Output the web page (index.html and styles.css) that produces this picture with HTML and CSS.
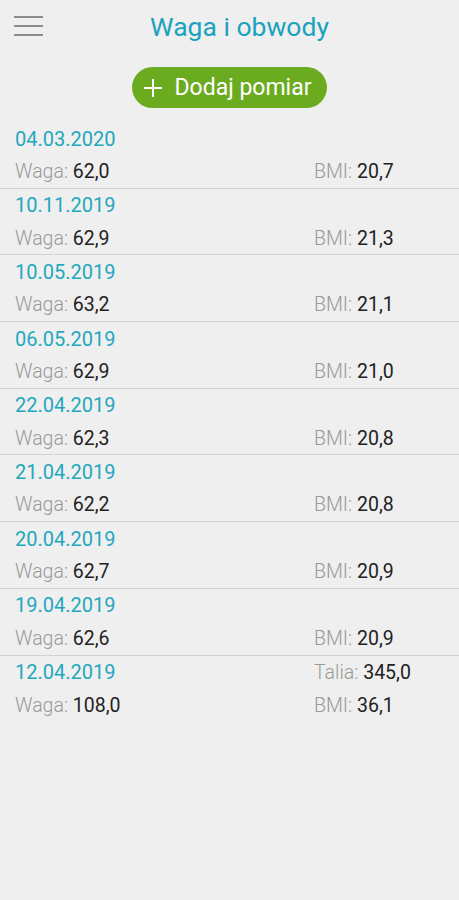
FILE: index.html
```html
<!DOCTYPE html>
<html lang="pl">
<head>
    <meta charset="UTF-8">
    <meta name="viewport" content="width=device-width, initial-scale=1.0">
    <title>Waga i obwody</title>
    <link rel="stylesheet" href="styles.css">
</head>
<body>

<div id="app">
    <div class="topbar">
        <button class="menu-btn" aria-label="Menu">
            <span></span><span></span><span></span>
        </button>
        <h1 class="title">Waga i obwody</h1>
    </div>

    <div class="add-wrap">
        <button class="add-btn">
            <svg width="18" height="18" viewBox="0 0 18 18">
                <path d="M9 0v18M0 9h18" stroke="#fff" stroke-width="2"/>
            </svg>
            Dodaj pomiar
        </button>
    </div>

    <div class="entries">
        <div class="entry">
            <div class="line"><span class="date">04.03.2020</span></div>
            <div class="line">
                <span class="cell"><span class="lbl">Waga:</span> 62,0</span>
                <span class="cell right"><span class="lbl">BMI:</span> 20,7</span>
            </div>
        </div>
        <div class="entry">
            <div class="line"><span class="date">10.11.2019</span></div>
            <div class="line">
                <span class="cell"><span class="lbl">Waga:</span> 62,9</span>
                <span class="cell right"><span class="lbl">BMI:</span> 21,3</span>
            </div>
        </div>
        <div class="entry">
            <div class="line"><span class="date">10.05.2019</span></div>
            <div class="line">
                <span class="cell"><span class="lbl">Waga:</span> 63,2</span>
                <span class="cell right"><span class="lbl">BMI:</span> 21,1</span>
            </div>
        </div>
        <div class="entry">
            <div class="line"><span class="date">06.05.2019</span></div>
            <div class="line">
                <span class="cell"><span class="lbl">Waga:</span> 62,9</span>
                <span class="cell right"><span class="lbl">BMI:</span> 21,0</span>
            </div>
        </div>
        <div class="entry">
            <div class="line"><span class="date">22.04.2019</span></div>
            <div class="line">
                <span class="cell"><span class="lbl">Waga:</span> 62,3</span>
                <span class="cell right"><span class="lbl">BMI:</span> 20,8</span>
            </div>
        </div>
        <div class="entry">
            <div class="line"><span class="date">21.04.2019</span></div>
            <div class="line">
                <span class="cell"><span class="lbl">Waga:</span> 62,2</span>
                <span class="cell right"><span class="lbl">BMI:</span> 20,8</span>
            </div>
        </div>
        <div class="entry">
            <div class="line"><span class="date">20.04.2019</span></div>
            <div class="line">
                <span class="cell"><span class="lbl">Waga:</span> 62,7</span>
                <span class="cell right"><span class="lbl">BMI:</span> 20,9</span>
            </div>
        </div>
        <div class="entry">
            <div class="line"><span class="date">19.04.2019</span></div>
            <div class="line">
                <span class="cell"><span class="lbl">Waga:</span> 62,6</span>
                <span class="cell right"><span class="lbl">BMI:</span> 20,9</span>
            </div>
        </div>
        <div class="entry last">
            <div class="line">
                <span class="date">12.04.2019</span>
                <span class="cell right"><span class="lbl">Talia:</span> 345,0</span>
            </div>
            <div class="line">
                <span class="cell"><span class="lbl">Waga:</span> 108,0</span>
                <span class="cell right"><span class="lbl">BMI:</span> 36,1</span>
            </div>
        </div>
    </div>
</div>

</body>
</html>
```

FILE: styles.css
```css
body {
    margin: 0;
    font-family: Roboto, "Noto Sans", sans-serif;
    background-color: #efefef;
    color: #222;
}

#app {
    width: 459px;
    height: 900px;
}

.topbar {
    position: relative;
    height: 54px;
    display: flex;
    align-items: center;
    justify-content: center;
}

.menu-btn {
    position: absolute;
    left: 14px;
    top: 16px;
    width: 29px;
    height: 20px;
    padding: 0;
    border: none;
    background: none;
    display: flex;
    flex-direction: column;
    justify-content: space-between;
}

.menu-btn span {
    display: block;
    height: 2px;
    background-color: #8c8c8c;
}

.title {
    margin: 0;
    font-size: 26.5px;
    font-weight: normal;
    color: #1ba2bf;
    padding-left: 20px;
    padding-bottom: 1px;
}

.add-wrap {
    display: flex;
    justify-content: center;
    padding-top: 13px;
}

.add-btn {
    display: flex;
    align-items: center;
    gap: 12px;
    height: 41px;
    padding: 0 15px 0 12px;
    border: none;
    border-radius: 21px;
    background-color: #6aab1f;
    color: #fff;
    font-family: Roboto, sans-serif;
    font-size: 23px;
}

.entries {
    margin-top: 14px;
}

.entry {
    height: 66.7px;
    box-sizing: border-box;
    border-bottom: 1px solid #d2d2d2;
    padding: 0 15px;
}

.entry.last {
    border-bottom: none;
}

.line {
    height: 33px;
    display: flex;
    align-items: center;
    font-size: 19.5px;
}

.date {
    color: #1ea8be;
    font-size: 20px;
    width: 299px;
}

.cell {
    width: 299px;
    color: #222;
}

.cell.right {
    width: auto;
}

.lbl {
    color: #999;
    font-weight: 300;
}
```
